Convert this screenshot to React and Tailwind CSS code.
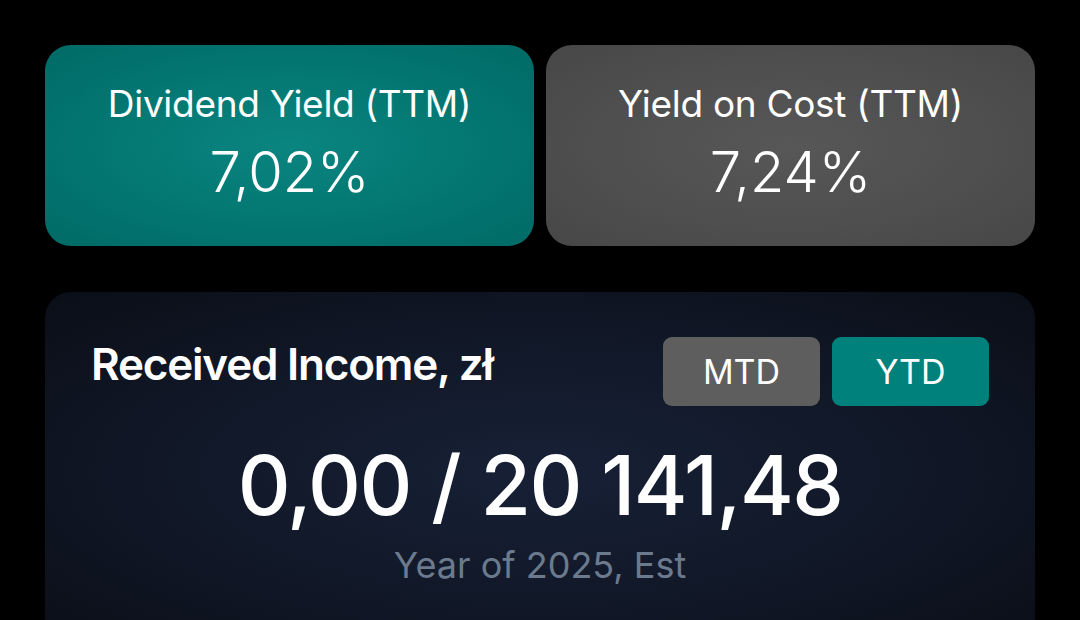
export default function App() {
  return (
    <div className="w-[1080px] h-[620px] overflow-hidden bg-black font-['Inter',sans-serif] text-white">
      <div className="flex gap-3 px-[45px] pt-[45px]">
        <div className="flex-1 h-[201px] pb-[6px] rounded-[26px] bg-[radial-gradient(ellipse_at_center,#0a8580_0%,#037570_60%,#006a66_100%)] flex flex-col items-center justify-center">
          <div className="text-[37px] leading-none font-normal tracking-[-0.3px]">Dividend Yield (TTM)</div>
          <div className="mt-[22px] text-[56px] leading-none font-light">7,02%</div>
        </div>
        <div className="flex-1 h-[201px] pb-[6px] rounded-[26px] bg-[radial-gradient(ellipse_at_center,#575757_0%,#4e4e4e_60%,#474747_100%)] flex flex-col items-center justify-center">
          <div className="text-[37px] leading-none font-normal tracking-[-0.3px]">Yield on Cost (TTM)</div>
          <div className="mt-[22px] text-[56px] leading-none font-light">7,24%</div>
        </div>
      </div>
      <div className="mx-[45px] mt-[46px] h-[360px] rounded-[26px] bg-[radial-gradient(ellipse_at_center,#172036_0%,#111828_50%,#0a0e17_100%)] px-[46px] pt-[45px]">
        <div className="flex items-start justify-between">
          <div className="mt-[5px] text-[44px] leading-none font-semibold tracking-[-1.2px]">Received Income, zł</div>
          <div className="flex gap-3">
            <div className="w-[157px] h-[69px] rounded-[9px] bg-[#5e5e5e] flex items-center justify-center text-[34px] font-normal">MTD</div>
            <div className="w-[157px] h-[69px] rounded-[9px] bg-[#00817c] flex items-center justify-center text-[34px] font-normal">YTD</div>
          </div>
        </div>
        <div className="mt-[39px] text-center text-[82px] leading-none font-medium tracking-[-1.5px]">0,00 / 20 141,48</div>
        <div className="mt-[20px] text-center text-[36px] leading-none text-[#6c7a8e]">Year of 2025, Est</div>
      </div>
    </div>
  );
}
